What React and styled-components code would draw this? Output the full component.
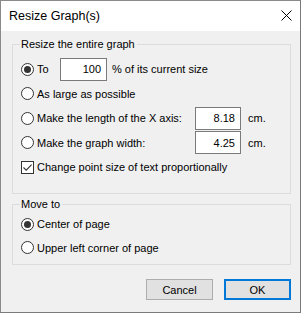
import React from 'react';
import styled, { createGlobalStyle } from 'styled-components';

const GlobalStyle = createGlobalStyle`
  html, body {
    margin: 0;
    padding: 0;
    background: #ffffff;
  }
  body {
    font-family: 'Liberation Sans', Arial, sans-serif;
    font-size: 11px;
    color: #000;
  }
`;

export default function App() {
  return (
    <>
      <GlobalStyle />
      <Window>
        <TitleBar>
          <span>Resize Graph(s)</span>
          <CloseIcon viewBox="0 0 11 11">
            <path d="M0.5 0.5 L10.5 10.5 M10.5 0.5 L0.5 10.5" stroke="#000" strokeWidth="1" />
          </CloseIcon>
        </TitleBar>

        <Body>
          <Group $top={12} $bottom={14}>
            <Legend>Resize the entire graph</Legend>
            <Row $h={24}>
              <Radio checked />
              <Label $w={23}>To</Label>
              <NumberBox $w={47}>100</NumberBox>
              <Unit $gap={5}>% of its current size</Unit>
            </Row>
            <Row $h={25}>
              <Radio />
              <Label>As large as possible</Label>
            </Row>
            <Row $h={24}>
              <Radio />
              <Label $w={158}>Make the length of the X axis:</Label>
              <NumberBox $w={46}>8.18</NumberBox>
              <Unit $gap={7}>cm.</Unit>
            </Row>
            <Row $h={25}>
              <Radio />
              <Label $w={158}>Make the graph width:</Label>
              <NumberBox $w={46}>4.25</NumberBox>
              <Unit $gap={7}>cm.</Unit>
            </Row>
            <Row $h={24}>
              <Check />
              <Label>Change point size of text proportionally</Label>
            </Row>
          </Group>

          <Group $top={7} $bottom={5} $mt={10}>
            <Legend>Move to</Legend>
            <Row $h={24}>
              <Radio checked />
              <Label>Center of page</Label>
            </Row>
            <Row $h={23}>
              <Radio />
              <Label>Upper left corner of page</Label>
            </Row>
          </Group>

          <Buttons>
            <Button>Cancel</Button>
            <Button $primary>OK</Button>
          </Buttons>
        </Body>
      </Window>
    </>
  );
}

function Radio({ checked }) {
  return <RadioCircle>{checked && <RadioDot />}</RadioCircle>;
}

function Check() {
  return (
    <CheckBox>
      <svg width="11" height="11" viewBox="0 0 11 11">
        <path d="M1.5 5.5 L4.2 8.2 L9.6 2.6" fill="none" stroke="#333" strokeWidth="1.1" />
      </svg>
    </CheckBox>
  );
}

const Window = styled.div`
  width: 299px;
  height: 311px;
  border: 1px solid #8a8a8a;
  border-right-color: #7a7a7a;
  border-bottom-color: #7a7a7a;
  background: #f0f0f0;
  display: flex;
  flex-direction: column;
`;

const TitleBar = styled.div`
  height: 30px;
  background: #ffffff;
  display: flex;
  align-items: center;
  justify-content: space-between;
  padding: 0 8px 0 8px;
  font-size: 12.5px;

  span {
    margin-top: -1px;
  }
`;

const CloseIcon = styled.svg`
  width: 11px;
  height: 11px;
  margin-top: -1px;
`;

const Body = styled.div`
  padding: 13px 9px 0 11px;
  display: flex;
  flex-direction: column;
`;

const Group = styled.div`
  position: relative;
  border: 1px solid #dcdcdc;
  padding: ${(p) => p.$top}px 8px ${(p) => p.$bottom}px 8px;
  margin-top: ${(p) => p.$mt || 0}px;
  display: flex;
  flex-direction: column;
`;

const Legend = styled.span`
  position: absolute;
  top: -9px;
  left: 7px;
  padding: 0 2px 0 1px;
  background: #f0f0f0;
  line-height: 16px;
`;

const Row = styled.div`
  height: ${(p) => p.$h}px;
  display: flex;
  align-items: center;
`;

const RadioCircle = styled.span`
  box-sizing: border-box;
  width: 13px;
  height: 13px;
  border: 1px solid #333;
  border-radius: 50%;
  background: #fff;
  display: flex;
  align-items: center;
  justify-content: center;
  flex-shrink: 0;
`;

const RadioDot = styled.span`
  width: 7px;
  height: 7px;
  border-radius: 50%;
  background: #333;
`;

const CheckBox = styled.span`
  box-sizing: border-box;
  width: 13px;
  height: 13px;
  border: 1px solid #333;
  background: #fff;
  display: flex;
  align-items: center;
  justify-content: center;
  flex-shrink: 0;
`;

const Label = styled.span`
  margin-left: 3px;
  white-space: nowrap;
  ${(p) => (p.$w ? `width: ${p.$w}px; flex-shrink: 0;` : '')}
`;

const Unit = styled.span`
  margin-left: ${(p) => p.$gap}px;
  white-space: nowrap;
`;

const NumberBox = styled.span`
  box-sizing: border-box;
  width: ${(p) => p.$w}px;
  height: 23px;
  flex-shrink: 0;
  border: 1px solid #7a7a7a;
  background: #fff;
  display: flex;
  align-items: center;
  justify-content: flex-end;
  padding-right: 5px;
`;

const Buttons = styled.div`
  display: flex;
  justify-content: flex-end;
  gap: 11px;
  margin-top: 14px;
`;

const Button = styled.button`
  box-sizing: border-box;
  width: 67px;
  height: 21px;
  font-family: inherit;
  font-size: 11px;
  color: #000;
  background: #e1e1e1;
  border: ${(p) => (p.$primary ? '2px solid #0078d7' : '1px solid #adadad')};
  padding: 0;
  display: flex;
  align-items: center;
  justify-content: center;
`;
